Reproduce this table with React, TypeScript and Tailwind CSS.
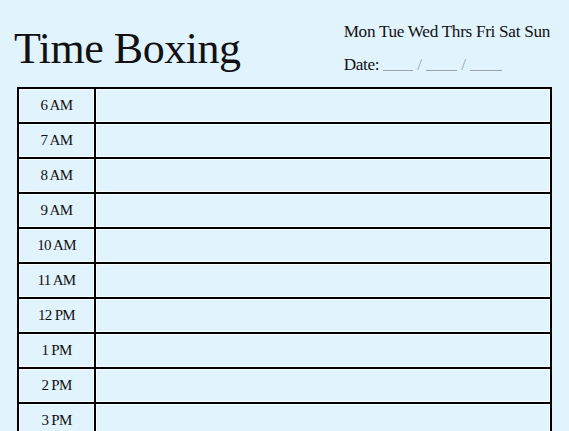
import React from "react";

const hours = ["6 AM", "7 AM", "8 AM", "9 AM", "10 AM", "11 AM", "12 PM", "1 PM", "2 PM", "3 PM"];

export default function App() {
  return (
    <div
      className="w-[569px] h-[431px] overflow-hidden bg-[#e1f3fd] text-[#111]"
      style={{ fontFamily: '"Liberation Serif", "DejaVu Serif", serif' }}
    >
      <div className="flex justify-between h-[87px]">
        <div className="pl-[14px] pt-[27px] text-[44px] leading-[44px] tracking-[-0.5px]">Time Boxing</div>
        <div className="pr-[19px] pt-[21px] flex flex-col items-start">
          <div className="text-[17.2px] leading-[21px] tracking-[-0.3px]">Mon Tue Wed Thrs Fri Sat Sun</div>
          <div className="mt-[12px] flex items-end text-[17.2px] leading-[21px]">
            <span className="tracking-[-0.3px]">Date:</span>
            <span className="ml-[4px] mb-[4px] w-[30px] border-b border-[#9aa3a8]" />
            <span className="mx-[4px] text-[#9aa3a8]">/</span>
            <span className="mb-[4px] w-[31px] border-b border-[#9aa3a8]" />
            <span className="mx-[4px] text-[#9aa3a8]">/</span>
            <span className="mb-[4px] w-[32px] border-b border-[#9aa3a8]" />
          </div>
        </div>
      </div>
      <div className="ml-[17px] w-[535px] border-2 border-b-0 border-black">
        {hours.map((h) => (
          <div key={h} className="flex h-[35px] border-b-2 border-black">
            <div className="w-[77px] shrink-0 border-r-2 border-black flex items-center justify-center text-[15px] tracking-[-0.7px] shadow-[inset_0_0_0_1px_rgba(255,255,255,0.75)]">
              {h}
            </div>
            <div className="flex-1 shadow-[inset_0_0_0_1px_rgba(255,255,255,0.75)]" />
          </div>
        ))}
      </div>
    </div>
  );
}
